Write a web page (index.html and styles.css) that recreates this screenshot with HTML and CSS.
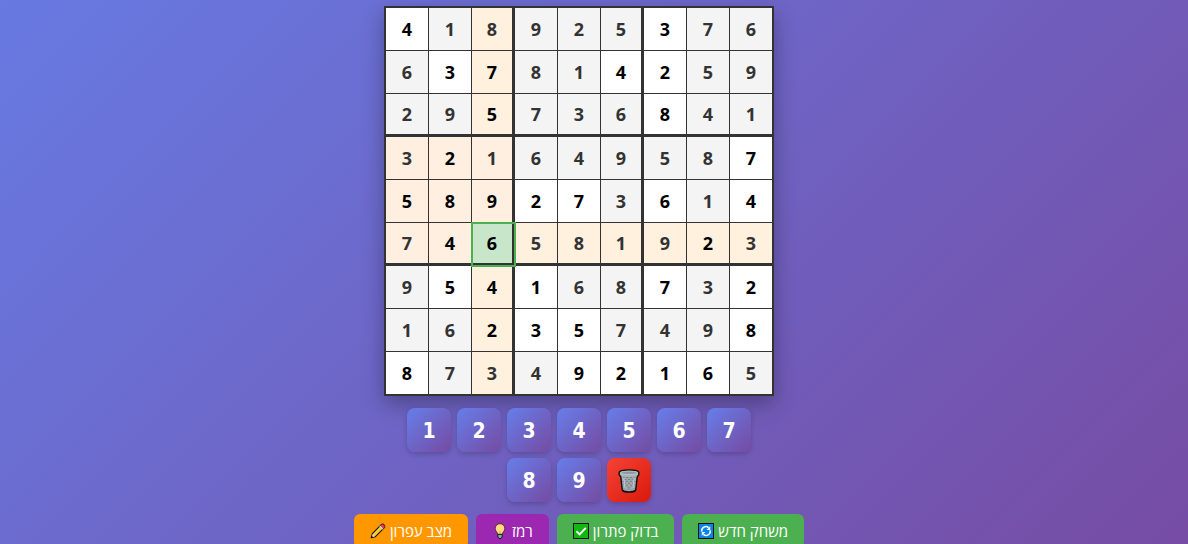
FILE: index.html
```html
<!DOCTYPE html>
<html lang="he" dir="rtl">
<head>
  <meta charset="UTF-8">
  <meta name="viewport" content="width=device-width, initial-scale=1.0">
  <title>סודוקו</title>
  <link rel="stylesheet" href="styles.css">
</head>
<body>

<main class="game">
  <div class="board" id="board"></div>

  <!-- Number pad -->
  <div class="number-pad">
    <button class="num-btn">1</button>
    <button class="num-btn">2</button>
    <button class="num-btn">3</button>
    <button class="num-btn">4</button>
    <button class="num-btn">5</button>
    <button class="num-btn">6</button>
    <button class="num-btn">7</button>
    <button class="num-btn">8</button>
    <button class="num-btn">9</button>
    <button class="num-btn erase" aria-label="מחק">
      <svg width="22" height="24" viewBox="0 0 24 24" preserveAspectRatio="none">
        <path d="M2.5 3.5 L4.6 20.5 Q5 23 12 23 Q19 23 19.4 20.5 L21.5 3.5 Z" fill="#9fabaf" stroke="#111" stroke-width="1.6"/>
        <path d="M6 8 L18 20 M5 12 L15 22 M10 8 L19 17 M14 8 L19.5 13 M18 8 L6 20 M19 12 L9 22 M14 8 L5.5 16.5 M10 8 L5 13" stroke="#6b767b" stroke-width="1" stroke-dasharray="1.5 1.5" fill="none"/>
        <path d="M6.4 9 L7.6 19 M17.6 9 L16.4 19" stroke="#c3ccd0" stroke-width="1"/>
        <path d="M1.2 3.6 Q1.5 1 12 1 Q22.5 1 22.8 3.6 Q23 7 20.5 7.3 Q12 8.6 3.5 7.3 Q1 7 1.2 3.6 Z" fill="#a9b4b8" stroke="none"/>
        <path d="M3 7.2 Q1 7 1.2 3.6 Q1.5 1 12 1 Q22.5 1 22.8 3.6 Q23 7 21 7.2" fill="none" stroke="#111" stroke-width="1.5"/>
        <ellipse cx="12" cy="3.8" rx="9" ry="1.7" fill="#8d999e" stroke="#c3ccd0" stroke-width=".8"/>
      </svg>
    </button>
  </div>

  <!-- Actions -->
  <div class="controls">
    <button class="btn">משחק חדש
      <svg width="16" height="16" viewBox="0 0 16 16">
        <rect x=".5" y=".5" width="15" height="15" fill="#0883e8" stroke="#111"/>
        <path d="M3.8 8.6 A4.2 4.2 0 0 1 10.6 4.6 M12.2 7.4 A4.2 4.2 0 0 1 5.4 11.4" fill="none" stroke="#fff" stroke-width="1.5"/>
        <path d="M12.2 3.2 V7 H8.6 Z M3.8 12.8 V9 H7.4 Z" fill="#fff"/>
      </svg>
    </button>
    <button class="btn">בדוק פתרון
      <svg width="16" height="16" viewBox="0 0 16 16">
        <rect x=".5" y=".5" width="15" height="15" fill="#13b713" stroke="#111"/>
        <path d="M3.4 8.2 L6.6 11.4 L12.8 4.8" fill="none" stroke="#fff" stroke-width="1.9"/>
      </svg>
    </button>
    <button class="btn hint">רמז
      <svg width="16" height="16" viewBox="0 0 16 16">
        <path d="M8 .7 A4.8 4.8 0 0 0 3.2 5.5 C3.2 8 5.3 8.8 5.8 11.5 H10.2 C10.7 8.8 12.8 8 12.8 5.5 A4.8 4.8 0 0 0 8 .7 Z" fill="#ffd983" stroke="#3a2708" stroke-width=".8"/>
        <path d="M7.4 11 V8 M8.6 11 V8" fill="none" stroke="#f0a840" stroke-width=".6"/>
        <path d="M5.8 11.3 H10.2 V14 L9 15.5 H7 L5.8 14 Z" fill="#7fa6ae" stroke="#111" stroke-width=".9"/>
      </svg>
    </button>
    <button class="btn pencil">מצב עפרון
      <svg width="16" height="16" viewBox="0 0 16 16">
        <path d="M1.2 14.8 L2.4 10.6 L11.3 1.7 Q12.6 .5 14 1.9 Q15.4 3.3 14.3 4.7 L5.4 13.6 Z" fill="#ffcf2e" stroke="#111" stroke-width="1.1" stroke-linejoin="round"/>
        <path d="M11.3 1.7 Q12.6 .5 14 1.9 Q15.4 3.3 14.3 4.7 L13.2 5.8 L10.2 2.8 Z" fill="#e8384f"/>
        <path d="M10.2 2.8 L13.2 5.8 L12.2 6.8 L9.2 3.8 Z" fill="#b8d4e0"/>
        <path d="M2.6 11 L5 13.4 L2 14.2 Z" fill="#f6d9a8"/>
        <path d="M1.2 14.8 L1.8 12.8 L3.2 14.2 Z" fill="#111"/>
      </svg>
    </button>
  </div>
</main>

<script src="script.js"></script>
</body>
</html>
```

FILE: styles.css
```css
* {
  box-sizing: border-box;
  margin: 0;
  padding: 0;
}

body {
  min-height: 100vh;
  font-family: "Noto Sans", "Open Sans", sans-serif;
  background: linear-gradient(135deg, #677ae2 0%, #764ca4 100%) fixed;
  overflow: hidden;
}

button {
  border: none;
  font-family: inherit;
  cursor: pointer;
}

.game {
  display: flex;
  flex-direction: column;
  align-items: center;
  gap: 12px;
  padding: 6px 30px 12px 0;
}

/* Board */
.board {
  direction: ltr;
  display: grid;
  /* last track has no inner border, so it is a pixel smaller */
  grid-template-columns: repeat(8, 43fr) 42fr;
  grid-template-rows: repeat(8, 43fr) 42fr;
  width: 100%;
  max-width: 390px;
  aspect-ratio: 1;
  border: 2px solid #333;
  background: #fff;
  box-shadow: 0 8px 20px rgba(0, 0, 0, 0.3);
}

.cell {
  min-width: 0;
  border: 0 solid #333;
  border-width: 0 1px 1px 0;
  background: #fff;
  color: #000;
  font-size: 18px;
  font-weight: bold;
  line-height: 24px;
}

.cell.fixed {
  background: #f4f4f4;
  color: #333;
}

.cell.line {
  background: #fff1de;
}

.cell.box {
  background: #ffefe0;
}

.cell:nth-child(9n+3),
.cell:nth-child(9n+6) {
  border-right-width: 3px;
}

.cell:nth-child(9n) {
  border-right-width: 0;
}

.cell:nth-child(n+19):nth-child(-n+27),
.cell:nth-child(n+46):nth-child(-n+54) {
  border-bottom-width: 3px;
}

.cell:nth-child(n+73) {
  border-bottom-width: 0;
}

.cell.selected {
  background: #c8e6c9;
  outline: 2px solid #4caf50;
  outline-offset: -1px;
  z-index: 1;
}

/* Number pad */
.number-pad {
  direction: ltr;
  display: flex;
  flex-wrap: wrap;
  justify-content: center;
  gap: 6px;
  max-width: 390px;
}

.num-btn {
  display: flex;
  align-items: center;
  justify-content: center;
  width: 44px;
  height: 44px;
  padding-top: 2px;
  border-radius: 8px;
  background: linear-gradient(135deg, #667eea, #764ba2);
  box-shadow: 0 2px 5px rgba(0, 0, 0, 0.2);
  color: #fff;
  font-family: "DejaVu Sans Condensed", "DejaVu Sans", sans-serif;
  font-size: 21px;
  font-weight: bold;
}

.num-btn.erase {
  background: linear-gradient(135deg, #f44336, #da190b);
}

/* Action buttons */
.controls {
  display: flex;
  flex-wrap: wrap;
  justify-content: center;
  gap: 8px;
}

.btn {
  display: flex;
  align-items: center;
  gap: 4px;
  padding: 8px 16px;
  border-radius: 6px;
  background: #4caf50;
  color: #fff;
  font-family: "Open Sans", "DejaVu Sans", sans-serif;
  font-size: 15px;
  line-height: 18px;
}

.btn.hint {
  background: #9c27b0;
}

.btn.pencil {
  background: #ff9800;
}
```

FILE: script.js
```js
const board = document.getElementById('board');

const rows = [
  '418925376',
  '637814259',
  '295736841',
  '321649587',
  '589273614',
  '746581923',
  '954168732',
  '162357498',
  '873492165'
];

// 1 = filled in by the player
const filled = [
  '100000100',
  '011001100',
  '001000100',
  '010000001',
  '111110101',
  '011000010',
  '011100101',
  '001110001',
  '100011110'
];

const selected = { row: 5, col: 2 };

rows.forEach((row, r) => {
  [...row].forEach((num, c) => {
    const cell = document.createElement('button');
    cell.className = 'cell';
    cell.textContent = num;

    if (filled[r][c] === '0') cell.classList.add('fixed');

    const sameBox = Math.floor(r / 3) === Math.floor(selected.row / 3) &&
                    Math.floor(c / 3) === Math.floor(selected.col / 3);
    if (r === selected.row && c === selected.col) {
      cell.classList.add('selected');
    } else if (sameBox) {
      cell.classList.add('box');
    } else if (r === selected.row || c === selected.col) {
      cell.classList.add('line');
    }

    board.appendChild(cell);
  });
});
```
